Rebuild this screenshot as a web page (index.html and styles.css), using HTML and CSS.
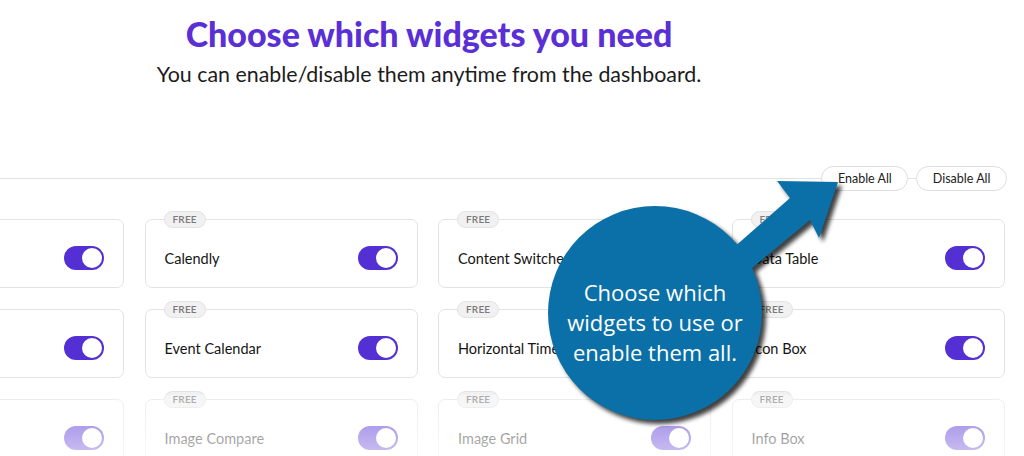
FILE: index.html
```html
<!DOCTYPE html>
<html lang="en">
<head>
<meta charset="utf-8">
<title>Choose which widgets you need</title>
<link rel="stylesheet" href="styles.css">
</head>
<body>
<div class="page">
  <header class="intro">
    <h1 class="title">Choose which widgets you need</h1>
    <p class="subtitle">You can enable/disable them anytime from the dashboard.</p>
  </header>

  <div class="toolbar">
    <span class="rule rule-grow"></span>
    <button class="pill-btn">Enable All</button>
    <span class="rule rule-gap"></span>
    <button class="pill-btn">Disable All</button>
  </div>

  <div class="grid">
    <div class="card"><span class="badge">FREE</span><span class="name">Business Hours</span><span class="switch"></span></div>
    <div class="card"><span class="badge">FREE</span><span class="name">Calendly</span><span class="switch"></span></div>
    <div class="card"><span class="badge">FREE</span><span class="name">Content Switcher</span><span class="switch"></span></div>
    <div class="card"><span class="badge">FREE</span><span class="name">Data Table</span><span class="switch"></span></div>

    <div class="card"><span class="badge">FREE</span><span class="name">Dual Button</span><span class="switch"></span></div>
    <div class="card"><span class="badge">FREE</span><span class="name">Event Calendar</span><span class="switch"></span></div>
    <div class="card"><span class="badge">FREE</span><span class="name">Horizontal Timeline</span><span class="switch"></span></div>
    <div class="card"><span class="badge">FREE</span><span class="name">Icon Box</span><span class="switch"></span></div>

    <div class="card"><span class="badge">FREE</span><span class="name">Image Accordion</span><span class="switch"></span></div>
    <div class="card"><span class="badge">FREE</span><span class="name">Image Compare</span><span class="switch"></span></div>
    <div class="card"><span class="badge">FREE</span><span class="name">Image Grid</span><span class="switch"></span></div>
    <div class="card"><span class="badge">FREE</span><span class="name">Info Box</span><span class="switch"></span></div>
  </div>
</div>

<div class="fade"></div>

<div class="callout">
  <svg class="callout-shape" width="330" height="270" viewBox="540 170 330 270" aria-hidden="true">
    <g class="shape-group">
      <polygon points="700,277 790,198 777,181 838,182 819,238 810,220 716,298" />
      <circle cx="655" cy="313" r="107" />
    </g>
  </svg>
  <div class="callout-text">Choose which<br>widgets to use or<br>enable them all.</div>
</div>
</body>
</html>
```

FILE: styles.css
```css
html, body {
  margin: 0;
  padding: 0;
}

body {
  width: 1024px;
  height: 456px;
  overflow: hidden;
  position: relative;
  background: #ffffff;
  font-family: Lato, "Noto Sans", "Liberation Sans", sans-serif;
  color: #1a1a1a;
}

.page {
  width: 1156px;
  margin-left: -149px;
}

.intro {
  text-align: center;
  padding-top: 13px;
}

.title {
  margin: 0;
  font-size: 34px;
  line-height: 42px;
  font-weight: 900;
  color: #5a2fd5;
}

.subtitle {
  margin: 5px 0 0;
  font-size: 21.4px;
  line-height: 28px;
  color: #1c1c1c;
}

.toolbar {
  display: flex;
  align-items: center;
  margin-top: 78px;
}

.rule {
  height: 1px;
  background: #e1e1e1;
}

.rule-grow {
  flex: 1;
}

.rule-gap {
  width: 8px;
}

.pill-btn {
  height: 25px;
  padding: 0 15.5px;
  border: 1px solid #dedede;
  border-radius: 13px;
  background: #ffffff;
  font-family: inherit;
  font-size: 12.5px;
  color: #222222;
}

.grid {
  display: grid;
  grid-template-columns: repeat(4, 273px);
  column-gap: 20.5px;
  row-gap: 21px;
  margin-top: 28px;
}

.card {
  position: relative;
  box-sizing: border-box;
  height: 69px;
  padding: 9px 19px 0;
  border: 1px solid #e3e3e3;
  border-radius: 7px;
  display: flex;
  align-items: center;
  justify-content: space-between;
}

.badge {
  position: absolute;
  top: -9px;
  left: 18px;
  box-sizing: border-box;
  height: 17px;
  padding: 0 8px;
  border: 1px solid #e2e2e2;
  border-radius: 9px;
  background: #f1f1f1;
  font-size: 10px;
  line-height: 15px;
  font-weight: 600;
  letter-spacing: 0.2px;
  color: #7a7a7a;
}

.name {
  font-size: 14.5px;
  color: #151515;
}

.switch {
  position: relative;
  width: 40px;
  height: 24px;
  border-radius: 12px;
  background: #5430d4;
}

.switch::after {
  content: "";
  position: absolute;
  top: 2px;
  right: 2px;
  width: 20px;
  height: 20px;
  border-radius: 50%;
  background: #ffffff;
}

.fade {
  position: absolute;
  left: 0;
  right: 0;
  top: 395px;
  bottom: 0;
  background: linear-gradient(rgba(255, 255, 255, 0.35), rgba(255, 255, 255, 0.7));
}

.callout {
  position: absolute;
  left: 540px;
  top: 170px;
  width: 330px;
  height: 270px;
}

.callout-shape {
  display: block;
  overflow: visible;
}

.shape-group {
  fill: #0a70a7;
  filter: drop-shadow(4px 4px 2px rgba(0, 0, 0, 0.75));
}

.callout-text {
  position: absolute;
  left: 15px;
  top: 107px;
  width: 200px;
  text-align: center;
  font-family: "Open Sans", "Noto Sans", sans-serif;
  font-size: 22px;
  line-height: 30px;
  color: #ffffff;
}
```
